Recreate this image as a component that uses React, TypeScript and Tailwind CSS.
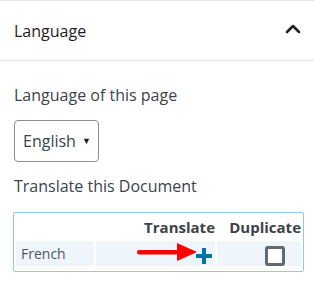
import { ChevronUp } from "lucide-react"

function Arrow() {
  return (
    <svg width="60" height="18" viewBox="0 0 60 18" className="absolute left-[-59px] top-[-5px]">
      <rect x="0" y="7" width="44" height="4.5" rx="2" fill="#f00" />
      <polygon points="40,0 60,9 40,18" fill="#f00" />
    </svg>
  )
}

export default function App() {
  return (
    <div className="w-[314px] h-[290px] bg-white text-[#32373c]" style={{ fontFamily: '"Open Sans", "Noto Sans", sans-serif' }}>
      <div className="border-t border-[#e2e4e7]" />
      <div className="h-[60px] flex items-center justify-between pl-[14px] pr-[9px] border-b border-[#e2e4e7]">
        <span className="text-[16px] text-[#1e1e1e]">Language</span>
        <ChevronUp className="w-[24px] h-[24px] text-[#1e1e1e] mb-[3px]" strokeWidth={2.5} />
      </div>
      <div className="px-[14px]">
        <div className="pt-[23px] text-[16px] leading-[22px] text-[#3c434a]">Language of this page</div>
        <div className="mt-[14px] w-[85px] h-[42px] border border-[#8c8f94] rounded-[4px] flex items-center justify-between pl-[8px] pr-[7px] text-[16px] text-[#3c434a]">
          <span>English</span>
          <span className="text-[9px] text-[#1e1e1e]">▼</span>
        </div>
        <div className="mt-[13px] text-[16px] leading-[22px] text-[#3c434a]">Translate this Document</div>
        <table className="mt-[15px] ml-[-1px] w-[291px] border border-[#8fcaec] rounded-[2px] border-separate border-spacing-[2px] pb-[3px]">
          <thead>
            <tr className="h-[24px]">
              <th className="w-[78px]"></th>
              <th className="text-right text-[15px] font-bold text-[#3c434a] leading-[24px] px-0">Translate</th>
              <th className="w-[84px] text-right text-[15px] font-bold text-[#3c434a] leading-[24px] px-0">Duplicate</th>
            </tr>
          </thead>
          <tbody>
            <tr className="h-[24px]">
              <td className="bg-[#eef5fb] pl-[5px] text-[14px] text-[#50575e]">French</td>
              <td className="bg-[#eef5fb] text-right pr-[3px]">
                <span className="relative inline-block align-middle w-[16px] h-[16px] mt-[2px]">
                  <Arrow />
                  <svg width="16" height="16" viewBox="0 0 16 16">
                    <rect x="6" y="0" width="4" height="16" fill="#0073aa" />
                    <rect x="0" y="6" width="16" height="4" fill="#0073aa" />
                  </svg>
                </span>
              </td>
              <td className="bg-[#eef5fb] text-right pr-[16px]">
                <span className="inline-block align-middle w-[20px] h-[20px] border-[3px] border-[#646970] rounded-[3px] bg-white mt-[2px]" />
              </td>
            </tr>
          </tbody>
        </table>
      </div>
    </div>
  )
}
